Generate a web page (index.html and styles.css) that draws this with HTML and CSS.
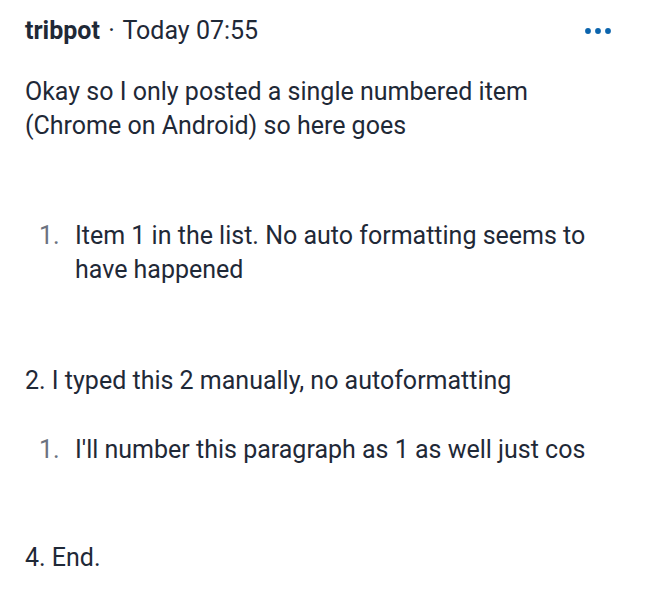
FILE: index.html
```html
<!DOCTYPE html>
<html>
<head>
    <title>tribpot - post</title>
    <link rel="stylesheet" href="styles.css">
</head>
<body>
    <div class="post">
        <div class="post-header">
            <div class="post-meta">
                <span class="username">tribpot</span>
                <span class="sep">&middot;</span>
                <span class="post-date">Today 07:55</span>
            </div>
            <button type="button" class="more-btn" aria-label="More">
                <svg width="28" height="8" viewBox="0 0 28 8">
                    <circle cx="4" cy="4" r="2.9" fill="#0b64ad"/>
                    <circle cx="14" cy="4" r="2.9" fill="#0b64ad"/>
                    <circle cx="24" cy="4" r="2.9" fill="#0b64ad"/>
                </svg>
            </button>
        </div>

        <div class="post-body">
            <p class="intro">Okay so I only posted a single numbered item (Chrome on Android) so here goes</p>

            <ol class="list list-first">
                <li>Item 1 in the list. No auto formatting seems to have happened</li>
            </ol>

            <p class="manual">2. I typed this 2 manually, no autoformatting</p>

            <ol class="list list-nested">
                <li>I'll number this paragraph as 1 as well just cos</li>
            </ol>

            <p class="end">4. End.</p>
        </div>
    </div>
</body>
</html>
```

FILE: styles.css
```css
body {
    margin: 0;
    background: #fff;
    font-family: Roboto, "Noto Sans", sans-serif;
    color: #1f2937;
}

.post {
    padding: 14px 25px 0 25px;
}

.post-header {
    display: flex;
    align-items: center;
    justify-content: space-between;
    font-size: 25px;
    line-height: 34px;
}

.username {
    font-weight: bold;
}

.sep {
    margin: 0 2px;
}

.more-btn {
    background: none;
    border: none;
    padding: 0;
    margin-right: 8px;
    display: flex;
    cursor: pointer;
}

.post-body {
    font-size: 25px;
    line-height: 33.6px;
    padding-right: 15px;
}

.post-body p,
.post-body ol {
    margin: 0;
}

.intro {
    padding-top: 27px;
}

.list {
    list-style: none;
    padding: 0 0 0 14px;
    counter-reset: item;
}

.list li {
    display: flex;
    counter-increment: item;
}

.list li::before {
    content: counter(item) ".";
    flex: 0 0 36px;
    color: #6b7280;
}

.list-first {
    margin-top: 77px !important;
}

.manual {
    margin-top: 78px !important;
}

.list-nested {
    margin-top: 35px !important;
}

.end {
    margin-top: 74px !important;
}
```
